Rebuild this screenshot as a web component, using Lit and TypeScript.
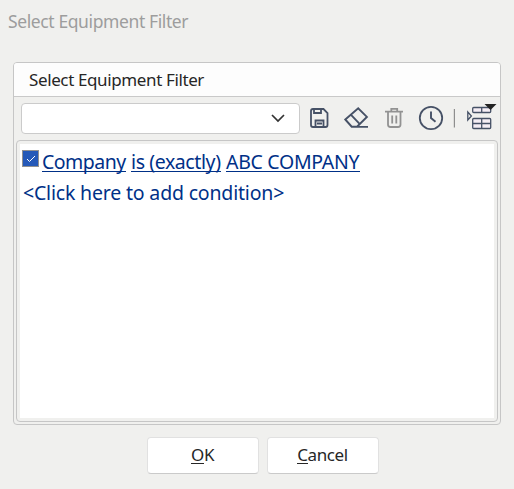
import { LitElement, html, css } from "lit";
import { customElement } from "lit/decorators.js";

@customElement("app-root")
export class AppRoot extends LitElement {
  static styles = css`
    :host {
      display: block;
      box-sizing: border-box;
      width: 514px;
      height: 489px;
      background: #f0f0ee;
      font-family: "Noto Sans", "Open Sans", sans-serif;
      color: #262626;
      overflow: hidden;
    }
    * { box-sizing: border-box; }
    svg { display: block; fill: none; flex: none; }
    .title {
      height: 62px;
      padding: 9px 0 0 8px;
      font-size: 17.5px;
      line-height: 24px;
      letter-spacing: -0.39px;
      color: #9d9d9d;
      white-space: nowrap;
    }
    .panel {
      width: 488px;
      height: 363px;
      margin-left: 13px;
      border: 1px solid #c6c6c6;
      border-radius: 4px;
      display: flex;
      flex-direction: column;
    }
    .heading {
      height: 34px;
      padding: 5px 0 0 15px;
      background: #fdfdfd;
      border-bottom: 1px solid #c9c9c9;
      border-radius: 3px 3px 0 0;
      font-size: 17px;
      line-height: 24px;
      letter-spacing: -0.38px;
      white-space: nowrap;
    }
    .toolbar {
      height: 43px;
      padding-left: 7px;
      display: flex;
      align-items: center;
    }
    .combo {
      flex: none;
      width: 279px;
      height: 31px;
      border: 1px solid #cbcbcb;
      border-radius: 4px;
      background: #fff;
      display: flex;
      align-items: center;
      justify-content: flex-end;
      padding: 0 13px 1px 0;
    }
    .conditions {
      width: 482px;
      height: 282px;
      margin-left: 2px;
      padding: 3px;
      border: 1px solid #c6c6c6;
      border-radius: 4px;
    }
    .list {
      height: 274px;
      background: #fff;
      color: #003087;
      font-size: 19.5px;
      line-height: 31px;
      white-space: nowrap;
      padding: 2px 0 0 2px;
    }
    .row { display: flex; height: 31px; }
    .check {
      width: 17px;
      height: 17px;
      margin: 4px 3px 0 0;
      background: #2559b8;
      border: 1px solid #919191;
    }
    .term {
      height: 26px;
      margin-right: 5px;
      border-bottom: 1px solid #003087;
    }
    .field { width: 84px; letter-spacing: -0.5px; }
    .operator { width: 90px; letter-spacing: -0.4px; }
    .value { width: 134px; letter-spacing: -0.3px; }
    .add { padding-left: 1px; letter-spacing: -0.18px; }
    .actions {
      display: flex;
      gap: 8px;
      margin: 12px 0 0 147px;
    }
    .button {
      width: 112px;
      height: 37px;
      border: 1px solid #e1e1e1;
      border-bottom-color: #cacaca;
      border-radius: 4px;
      background: #fff;
      text-align: center;
      font-size: 17px;
      line-height: 34px;
      letter-spacing: -0.4px;
      padding-right: 1px;
    }
    .key { display: inline-block; height: 26px; line-height: 34px; border-bottom: 1px solid #262626; vertical-align: top; }
  `;

  render() {
    return html`
      <div class="title">Select Equipment Filter</div>
      <div class="panel">
        <div class="heading">Select Equipment Filter</div>
        <div class="toolbar">
          <div class="combo">
            <svg width="16" height="10" viewBox="0 0 16 10" stroke="#333" stroke-width="1.7"><path d="M2 2l6 6 6-6" /></svg>
          </div>
          <svg width="199" height="43" viewBox="0 0 199 43" stroke="#465166" stroke-width="2">
            <path d="M13 12h10.500l4 4V28a2 2 0 0 1-2 2H13a2 2 0 0 1-2-2V14a2 2 0 0 1 2-2zM14 12v4h7V12M15.500 30v-6.500h8V30M17 26.500h5" stroke-width="1.800" />
            <path d="M45.300 22.500L58.200 11.300l8.700 8.600L57 29.700h-5.300zM50.800 17.600l8.800 9.200M56 29.900h12" stroke-width="1.900" />
            <path d="M85 14.700h18M91.300 14.500v-2.700h5.900v2.700M88 15v12.500q0 2.500 2.500 2.500h7.500q2.500 0 2.500-2.500V15M92.200 18.500v8M96.300 18.500v8" stroke="#929292" stroke-width="1.800" />
            <circle cx="131" cy="21" r="11.200" stroke-width="1.800" />
            <path d="M131 14.500v6.500l4.500 3.700" stroke-width="1.900" />
            <path d="M154.400 12v18.500" stroke="#8e8e8e" stroke-width="1.200" />
            <path d="M167.800 15v8l3.600-4z" stroke-width="1.300" />
            <g fill="#f4edf4" stroke-width="1.300">
              <rect x="172.700" y="10.500" width="18" height="5" rx="1" />
              <rect x="172.700" y="21.500" width="18" height="10" rx="1" />
              <path d="M181.700 10.500v5M181.700 21.500v10M172.700 26.500h18" />
            </g>
            <path d="M184.500 7h12l-6 6z" fill="#222" stroke="none" />
          </svg>
        </div>
        <div class="conditions">
          <div class="list">
            <div class="row">
              <div class="check">
                <svg width="15" height="15" viewBox="0 0 15 15" stroke="#fff" stroke-width="1"><path d="M4 8l2.500 2.500 5.500-5.500" /></svg>
              </div>
              <span class="term field">Company</span>
              <span class="term operator">is (exactly)</span>
              <span class="term value">ABC COMPANY</span>
            </div>
            <div class="add">&lt;Click here to add condition&gt;</div>
          </div>
        </div>
      </div>
      <div class="actions">
        <div class="button"><span class="key">O</span>K</div>
        <div class="button"><span class="key">C</span>ancel</div>
      </div>
    `;
  }
}
